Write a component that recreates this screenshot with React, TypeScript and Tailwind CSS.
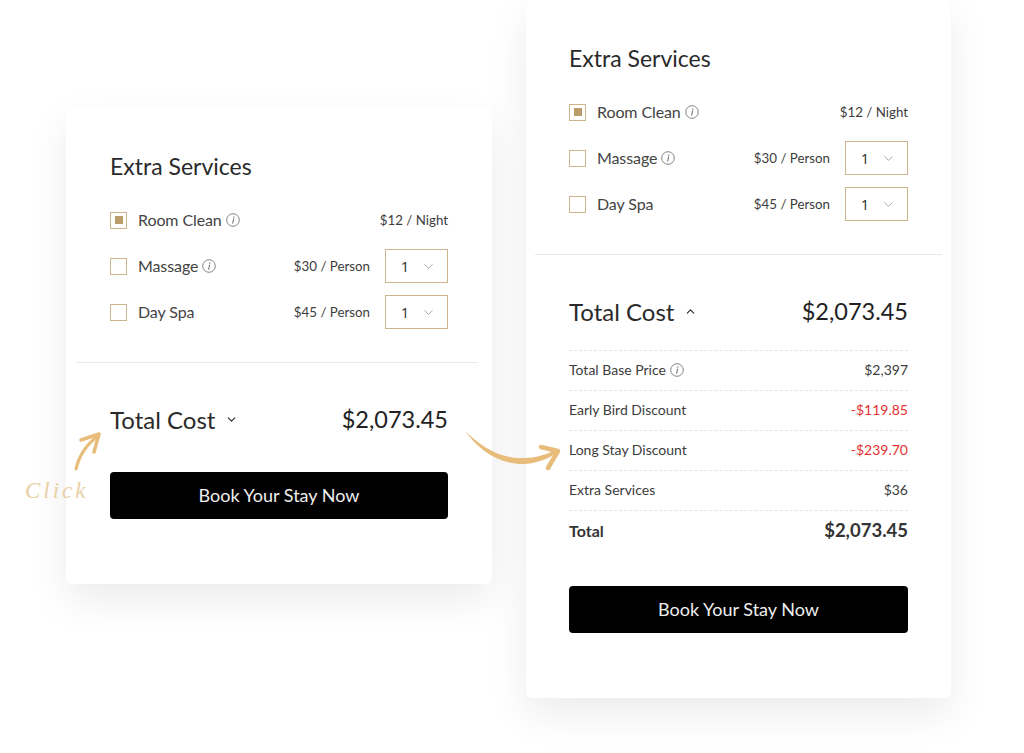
import { ChevronDown, ChevronUp } from 'lucide-react'

const headFont = "font-['Lato','Noto_Sans',sans-serif]"
const bodyFont = "font-['Lato','Open_Sans',sans-serif]"

function InfoIcon() {
  return (
    <svg width="14" height="14" viewBox="0 0 14 14" fill="none" className="shrink-0 text-[#666]">
      <circle cx="7" cy="7" r="6.3" stroke="currentColor" strokeWidth="0.8" />
      <path d="M7.6 6 6.7 10.2M7.8 3.9v.5" stroke="currentColor" strokeWidth="1" strokeLinecap="round" />
    </svg>
  )
}

function Qty() {
  return (
    <div className="ml-[15px] flex h-[34px] w-[63px] items-center justify-between border border-[#cdb48c] pl-[15px] pr-[11px] text-[14px] text-[#333]">
      <span>1</span>
      <ChevronDown size={15} strokeWidth={1} className="text-[#777]" />
    </div>
  )
}

function ServiceRow({ name, price, checked, info, select }: { name: string; price: string; checked?: boolean; info?: boolean; select?: boolean }) {
  return (
    <div className="flex h-[34px] items-center">
      <div className="flex h-[17px] w-[17px] items-center justify-center border border-[#cdb48c]">
        {checked && <div className="h-[8px] w-[8px] bg-[#bb9d6c]" />}
      </div>
      <span className={`${headFont} ml-[11px] mr-[4px] text-[16px] font-normal tracking-[-0.1px] text-[#444]`}>{name}</span>
      {info && <InfoIcon />}
      <span className={`${bodyFont} ml-auto pt-[2px] text-[13.3px] text-[#3c3c3c]`}>{price}</span>
      {select && <Qty />}
    </div>
  )
}

function DetailRow({ label, value, red, info }: { label: string; value: string; red?: boolean; info?: boolean }) {
  return (
    <div className="flex h-[40px] items-center justify-between border-t border-dashed border-[#e4e4e4] pb-[2px] text-[14px] text-[#3c3c3c]">
      <span className="flex items-center gap-[4px]">
        {label}
        {info && <InfoIcon />}
      </span>
      <span className={red ? 'text-[#e5312f]' : ''}>{value}</span>
    </div>
  )
}

function Card({ expanded, className }: { expanded?: boolean; className: string }) {
  const pad = expanded ? 'px-[43px]' : 'px-[44px]'
  return (
    <div className={`${className} shrink-0 rounded-[6px] bg-white pb-[65px] shadow-[0_16px_40px_rgba(0,0,0,0.08)]`}>
      <div className={`${pad} pt-[40px]`}>
        <h2 className={`${headFont} text-[23px] leading-[36px] font-normal text-[#2a2a2a]`}>Extra Services</h2>
        <div className="mt-[19px] flex flex-col gap-[12px]">
          <ServiceRow name="Room Clean" price="$12 / Night" checked info />
          <ServiceRow name="Massage" price="$30 / Person" info select />
          <ServiceRow name="Day Spa" price="$45 / Person" select />
        </div>
      </div>
      <div className={`mt-[33px] border-t border-[#e9e9e9] ${expanded ? 'mx-[9px]' : 'ml-[10px] mr-[14px]'}`} />
      <div className={`${bodyFont} ${pad}`}>
        <div className="flex h-[95px] items-center justify-between pt-[18px]">
          <span className={`${headFont} flex items-center gap-[10px] text-[24px] font-normal text-[#2a2a2a]`}>
            Total Cost
            {expanded ? <ChevronUp size={13} strokeWidth={2} /> : <ChevronDown size={13} strokeWidth={2} />}
          </span>
          <span className="text-[23.5px] text-[#222]">$2,073.45</span>
        </div>
        {expanded ? (
          <div className="mb-[35px]">
            <DetailRow label="Total Base Price" value="$2,397" info />
            <DetailRow label="Early Bird Discount" value="-$119.85" red />
            <DetailRow label="Long Stay Discount" value="-$239.70" red />
            <DetailRow label="Extra Services" value="$36" />
            <div className="flex h-[41px] items-center justify-between border-t border-dashed border-[#e4e4e4] text-[18.5px] font-bold text-[#333]">
              <span className="text-[16px]">Total</span>
              <span>$2,073.45</span>
            </div>
          </div>
        ) : (
          <div className="h-[14px]" />
        )}
        <button className={`${headFont} h-[47px] w-full rounded-[4px] bg-black text-[18px] font-normal text-[#eee]`}>
          Book Your Stay Now
        </button>
      </div>
    </div>
  )
}

export default function App() {
  return (
    <div className="relative flex h-[753px] w-[1024px] items-start gap-[34px] overflow-hidden bg-white pl-[66px]">
      <Card className="mt-[108px] w-[426px]" />
      <Card className="w-[425px]" expanded />

      {/* hand drawn arrows */}
      <svg className="absolute left-0 top-0" width="1024" height="753" fill="none">
        <path d="M76 469C79 456 87 444 98 436" stroke="#e8bd7c" strokeWidth="3.2" strokeLinecap="round" />
        <path d="M81 440 99 434 94 452" stroke="#e8bd7c" strokeWidth="3.6" strokeLinecap="round" strokeLinejoin="round" />
        <path d="M465 431C478 449 498 465 525 464C538 463 550 458 558 452L557 449C546 455 535 458 524 458C500 459 482 447 465 431Z" fill="#e8bd7c" />
        <path d="M541 447 558 451 548 468" stroke="#e8bd7c" strokeWidth="4.5" strokeLinecap="round" strokeLinejoin="round" />
      </svg>
      <span className="absolute left-[25px] top-[474px] font-['Liberation_Serif',serif] text-[23px] italic tracking-[3px] text-[#e9d0a5]">
        Click
      </span>
    </div>
  )
}
